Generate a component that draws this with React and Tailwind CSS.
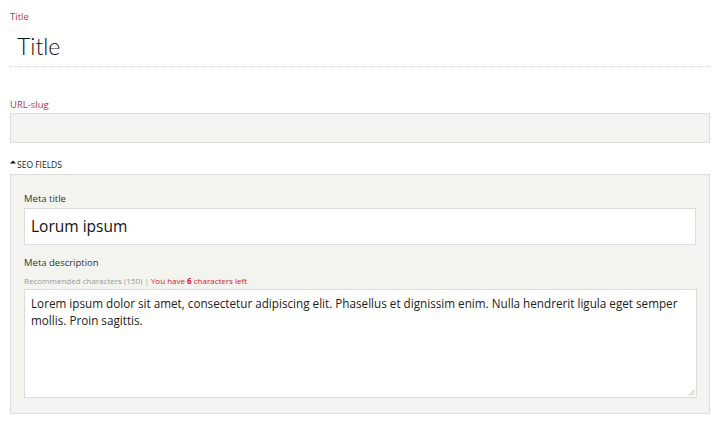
export default function App() {
  const desc =
    "Lorem ipsum dolor sit amet, consectetur adipiscing elit. Phasellus et dignissim enim. Nulla hendrerit ligula eget semper mollis. Proin sagittis.";
  return (
    <div className="w-[720px] h-[426px] bg-white px-[10px] font-['Open_Sans',sans-serif] overflow-hidden">
      <div className="pt-[11px] text-[9.5px] leading-[12px] text-[#b03a3f]">Title</div>
      <div className="mt-[7px] h-[32px] pl-[7px] text-[23px] leading-[32px] text-[#111] font-light font-['Lato',sans-serif]">
        Title
      </div>
      <div className="h-[5px] border-b border-dotted border-[#d8d8d8]" />
      <div className="mt-[32px] text-[9.5px] leading-[12px] text-[#b03a3f]">URL-slug</div>
      <div className="mt-[2px] h-[30px] bg-[#f3f3ef] border border-[#dcdcd8]" />
      <div className="mt-[16px] h-[12px] flex items-center text-[8.5px] leading-[12px] text-[#222] uppercase">
        <svg width="6" height="4" viewBox="0 0 6 4" className="mt-[-6px] mr-[1px]">
          <path d="M0 3.5 L3 0.5 L6 3.5 Z" fill="#111" />
        </svg>
        <span>SEO Fields</span>
      </div>
      <div className="mt-[3px] h-[240px] bg-[#f3f3ef] border border-[#dcdcd8] pt-[18px] px-[13px]">
        <div className="text-[9.5px] leading-[12px] text-[#333]">Meta title</div>
        <div className="mt-[3px] h-[37px] bg-white border border-[#dcdcd8] flex items-center pl-[6px] text-[15.5px] text-[#111]">
          Lorum ipsum
        </div>
        <div className="mt-[12px] text-[9.5px] leading-[12px] text-[#333]">Meta description</div>
        <div className="mt-[6px] h-[11px] text-[8px] leading-[11px] text-[#999]">
          Recommended characters (150) <span className="text-[#aaa]">|</span>{" "}
          <span className="text-[#e0142a]">
            You have <span className="font-bold">6</span> characters left
          </span>
        </div>
        <div className="relative mt-[3px] w-[673px] h-[109px] bg-white border border-[#dcdcd8] pl-[6px] pr-[10px] pt-[5px] text-[11.7px] leading-[17px] text-[#222]">
          {desc}
          <svg width="7" height="7" viewBox="0 0 7 7" className="absolute right-[1px] bottom-[1px]">
            <path d="M1 6.5 L6.5 1 M4 6.5 L6.5 4" stroke="#999" strokeWidth="0.8" />
          </svg>
        </div>
      </div>
    </div>
  );
}
